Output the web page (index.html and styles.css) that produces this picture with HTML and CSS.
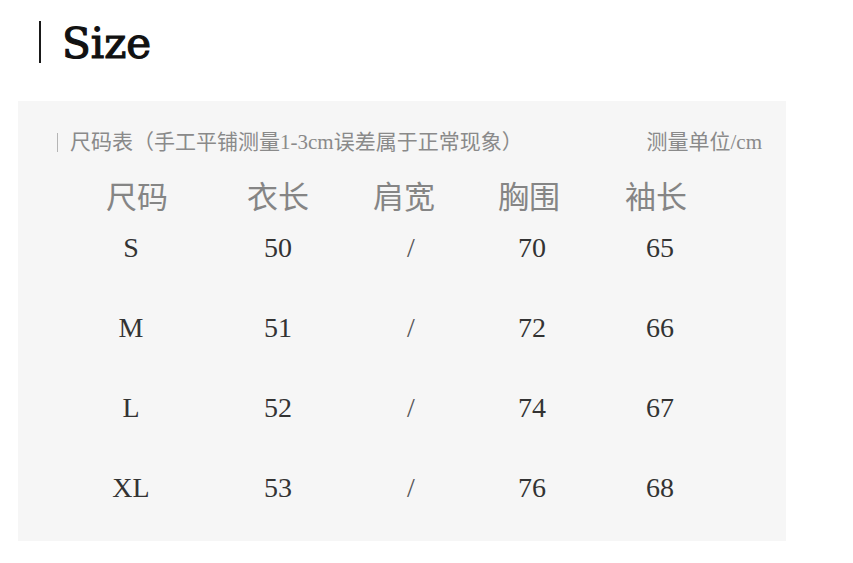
FILE: index.html
```html
<!DOCTYPE html>
<html lang="zh-CN">
<head>
<meta charset="utf-8">
<title>Size</title>
<link rel="stylesheet" href="styles.css">
</head>
<body>
  <header class="title">
    <span class="title-bar"></span>
    <h1 class="title-text">Size</h1>
  </header>
  <section class="panel">
    <div class="note">
      <p class="note-left"><span class="note-bar"></span>尺码表（手工平铺测量1-3cm误差属于正常现象）</p>
      <p class="note-right">测量单位/cm</p>
    </div>
    <div class="table">
      <div class="row head">
        <span class="c1">尺码</span><span class="c2">衣长</span><span class="c3">肩宽</span><span class="c4">胸围</span><span class="c5">袖长</span>
      </div>
      <div class="row data">
        <span class="c1">S</span><span class="c2">50</span><span class="c3">/</span><span class="c4">70</span><span class="c5">65</span>
      </div>
      <div class="row data">
        <span class="c1">M</span><span class="c2">51</span><span class="c3">/</span><span class="c4">72</span><span class="c5">66</span>
      </div>
      <div class="row data">
        <span class="c1">L</span><span class="c2">52</span><span class="c3">/</span><span class="c4">74</span><span class="c5">67</span>
      </div>
      <div class="row data">
        <span class="c1">XL</span><span class="c2">53</span><span class="c3">/</span><span class="c4">76</span><span class="c5">68</span>
      </div>
    </div>
  </section>
</body>
</html>
```

FILE: styles.css
```css
html, body {
  margin: 0;
  padding: 0;
  background: #ffffff;
}

body {
  width: 853px;
  height: 563px;
  overflow: hidden;
  font-family: "Liberation Serif", "Noto Sans CJK SC", serif;
}

.title {
  display: flex;
  align-items: flex-start;
  height: 101px;
  padding-left: 39px;
  box-sizing: border-box;
}

.title-bar {
  width: 2px;
  height: 42px;
  margin-top: 21px;
  background: #1a1a1a;
}

.title-text {
  margin: 0 0 0 21px;
  padding-top: 20px;
  font-family: "DejaVu Serif", serif;
  font-weight: normal;
  font-size: 42px;
  line-height: 48px;
  color: #111;
  -webkit-text-stroke: 1.2px #111;
}

.panel {
  margin-left: 18px;
  width: 768px;
  height: 440px;
  background: #f6f6f6;
  box-sizing: border-box;
  padding-top: 29px;
}

.note {
  display: flex;
  justify-content: space-between;
  align-items: center;
  padding-left: 39px;
  padding-right: 24px;
  height: 24px;
}

.note p {
  margin: 0;
  font-size: 21px;
  line-height: 24px;
  color: #8a8a8a;
  font-family: "Liberation Serif", "Noto Sans CJK SC", serif;
}

.note-left {
  display: flex;
  align-items: center;
}

.note-bar {
  width: 1px;
  height: 19px;
  background: #b5b5b5;
  margin-right: 12px;
}

.table {
  display: flex;
  flex-direction: column;
  gap: 40px;
  margin-top: 24px;
}

.row {
  display: grid;
  grid-template-columns: 150px 132px 120px 130px 124px;
  padding-left: 44px;
  text-align: center;
}

.head {
  font-family: "Noto Sans CJK SC", sans-serif;
  font-size: 31px;
  line-height: 34px;
  color: #858585;
  margin-bottom: -24px;
}

.data {
  font-family: "Liberation Serif", serif;
  font-size: 28px;
  line-height: 40px;
  color: #333333;
}

.data .c1 {
  padding-right: 12px;
}

.data .c3 {
  padding-left: 14px;
  color: #555;
}

.data .c4 {
  padding-left: 6px;
}

.data .c5 {
  padding-left: 8px;
}
```
